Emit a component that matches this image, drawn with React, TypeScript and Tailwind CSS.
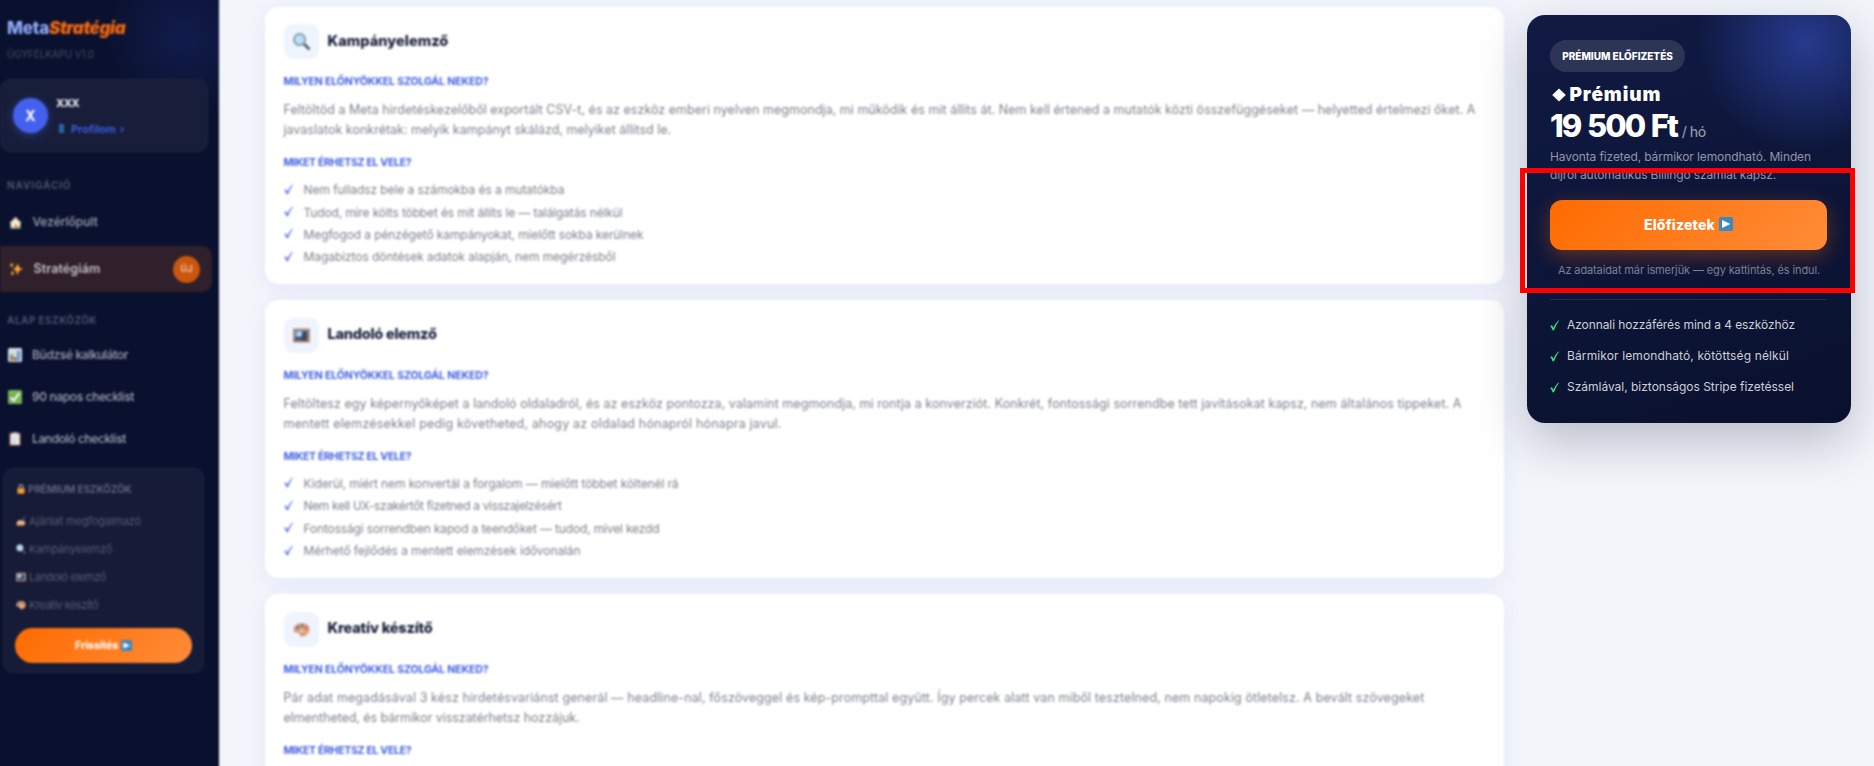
import { clsx } from "clsx";

type Line = { text: string; className: string };

type IconName = "house" | "sparkles" | "chart" | "check" | "clipboard" | "lock" | "writing" | "search" | "frame" | "palette" | "play";

type Tool = {
    icon: IconName;
    title: Line;
    benefit: Line[];
    results: Line[];
};

const tools: Tool[] = [
    {
        icon: "search",
        title: { text: "Kampányelemző", className: "tracking-[0.04px]" },
        benefit: [
            {
                text: "Feltöltöd a Meta hirdetéskezelőből exportált CSV-t, és az eszköz emberi nyelven megmondja, mi működik és mit állíts át. Nem kell értened a mutatók közti összefüggéseket — helyetted értelmezi őket. A",
                className: "tracking-[0.02px]",
            },
            { text: "javaslatok konkrétak: melyik kampányt skálázd, melyiket állítsd le.", className: "tracking-normal" },
        ],
        results: [
            { text: "Nem fulladsz bele a számokba és a mutatókba", className: "tracking-[-0.07px]" },
            { text: "Tudod, mire költs többet és mit állíts le — találgatás nélkül", className: "tracking-[-0.137px]" },
            { text: "Megfogod a pénzégető kampányokat, mielőtt sokba kerülnek", className: "tracking-[-0.105px]" },
            { text: "Magabiztos döntések adatok alapján, nem megérzésből", className: "tracking-[-0.072px]" },
        ],
    },
    {
        icon: "frame",
        title: { text: "Landoló elemző", className: "tracking-[-0.24px]" },
        benefit: [
            {
                text: "Feltöltesz egy képernyőképet a landoló oldaladról, és az eszköz pontozza, valamint megmondja, mi rontja a konverziót. Konkrét, fontossági sorrendbe tett javításokat kapsz, nem általános tippeket. A",
                className: "tracking-[0.055px]",
            },
            { text: "mentett elemzésekkel pedig követheted, ahogy az oldalad hónapról hónapra javul.", className: "tracking-[0.177px]" },
        ],
        results: [
            { text: "Kiderül, miért nem konvertál a forgalom — mielőtt többet költenél rá", className: "tracking-[-0.111px]" },
            { text: "Nem kell UX-szakértőt fizetned a visszajelzésért", className: "tracking-[-0.338px]" },
            { text: "Fontossági sorrendben kapod a teendőket — tudod, mivel kezdd", className: "tracking-[-0.152px]" },
            { text: "Mérhető fejlődés a mentett elemzések idővonalán", className: "tracking-[-0.09px]" },
        ],
    },
    {
        icon: "palette",
        title: { text: "Kreatív készítő", className: "tracking-[-0.17px]" },
        benefit: [
            {
                text: "Pár adat megadásával 3 kész hirdetésvariánst generál — headline-nal, főszöveggel és kép-prompttal együtt. Így percek alatt van miből tesztelned, nem napokig ötletelsz. A bevált szövegeket",
                className: "tracking-[0.1px]",
            },
            { text: "elmentheted, és bármikor visszatérhetsz hozzájuk.", className: "tracking-[-0.07px]" },
        ],
        results: [],
    },
];

const basicTools: { icon: IconName; label: string; className: string }[] = [
    { icon: "chart", label: "Büdzsé kalkulátor", className: "tracking-[-0.36px]" },
    { icon: "check", label: "90 napos checklist", className: "tracking-[-0.35px]" },
    { icon: "clipboard", label: "Landoló checklist", className: "tracking-[-0.38px]" },
];

const premiumTools: { icon: IconName; label: string; className: string }[] = [
    { icon: "writing", label: "Ajánlat megfogalmazó", className: "tracking-[-0.176px]" },
    { icon: "search", label: "Kampányelemző", className: "tracking-[-0.244px]" },
    { icon: "frame", label: "Landoló elemző", className: "tracking-[-0.373px]" },
    { icon: "palette", label: "Kreatív készítő", className: "tracking-[-0.495px]" },
];

const perks: Line[] = [
    { text: "Azonnali hozzáférés mind a 4 eszközhöz", className: "tracking-[-0.089px]" },
    { text: "Bármikor lemondható, kötöttség nélkül", className: "tracking-[0.123px]" },
    { text: "Számlával, biztonságos Stripe fizetéssel", className: "tracking-[-0.016px]" },
];

const shapes = {
    house: (
        <>
            <path d="M5 15h26v19H5z" fill="#ffe8b6" />
            <path d="M18 2 L34 18 L31 20 L18 8 L5 20 L2 18 Z" fill="#e6aaaa" />
            <path d="M18 7 L31 20 V34 H5 V20 Z" fill="#f5eedf" />
            <path d="M15 23h7v11h-7z" fill="#c98f62" />
            <path d="M23 30h10v5H23zM3 31h8v4H3z" fill="#5c913b" />
        </>
    ),
    sparkles: (
        <path
            d="M22 3 L26 14 L36 18 L26 22 L22 34 L18 22 L9 18 L18 14 Z M7 1 L9 6 L13 8 L9 10 L7 15 L5 10 L1 8 L5 6 Z M9 22 L11 27 L15 29 L11 31 L9 36 L7 31 L3 29 L7 27 Z"
            fill="#ffac33"
        />
    ),
    chart: (
        <>
            <rect width="36" height="36" rx="4" fill="#d5dde4" />
            <path d="M23 7h8v26h-8z" fill="#5c9dd6" />
            <path d="M5 17h8v16H5z" fill="#6f9e58" />
            <path d="M14 23h8v10h-8z" fill="#d05a52" />
        </>
    ),
    check: (
        <>
            <rect width="36" height="36" rx="4" fill="#77b255" />
            <path d="M7 20 L15 27 L29 8" fill="none" stroke="#fff" strokeWidth="5" />
        </>
    ),
    clipboard: (
        <>
            <rect x="4" y="2" width="28" height="33" rx="3" fill="#c1806a" />
            <path d="M7 6h22v26H7z" fill="#f1f4f8" />
            <path d="M12 1h12v7H12z" fill="#ccd6dd" />
            <path d="M11 14h14v2H11zM11 20h14v2H11zM11 26h9v2h-9z" fill="#aab8c2" />
        </>
    ),
    lock: (
        <>
            <path d="M11 17 V10 a7 7 0 0 1 14 0 V17" fill="none" stroke="#aab8c2" strokeWidth="4" />
            <rect x="5" y="15" width="26" height="20" rx="4" fill="#ff9a2e" />
        </>
    ),
    writing: (
        <>
            <path d="M3 21 L14 14 L30 18 L34 25 L28 34 H3 Z" fill="#f2b983" />
            <path d="M30 1 L33 4 L22 20 L18 22 Z" fill="#4a6fb5" />
            <path d="M2 29h28v5H2z" fill="#d78a4a" />
        </>
    ),
    search: (
        <>
            <path d="M23 23 L33 33" stroke="#4f5f72" strokeWidth="6" strokeLinecap="round" />
            <circle cx="14" cy="14" r="12" fill="#bbddf5" stroke="#8195aa" strokeWidth="3.5" />
        </>
    ),
    frame: (
        <>
            <rect y="3" width="36" height="30" rx="1" fill="#c1875f" />
            <path d="M4 7h28v22H4z" fill="#5b9be0" />
            <path d="M4 23 Q14 18 22 22 V29 H4z" fill="#3f5c80" />
            <circle cx="13" cy="15" r="5" fill="#c8def2" />
            <path d="M21 9 h9 v20 h-11 v-9z" fill="#42454f" />
        </>
    ),
    palette: (
        <>
            <path d="M18 4 C30 4 36 11 35 19 C34 28 26 33 18 33 C13 33 16 28 12 26 C8 24 1 26 1 19 C1 10 9 4 18 4 Z" fill="#d99e82" />
            <circle cx="10" cy="14" r="3.2" fill="#5c6f8c" />
            <circle cx="19" cy="10" r="3.2" fill="#6b7d62" />
            <circle cx="28" cy="15" r="3.2" fill="#dd5f4e" />
            <circle cx="27" cy="24" r="3.2" fill="#ffb04c" />
            <circle cx="18" cy="21" r="2.6" fill="#f7e3d8" />
        </>
    ),
    play: (
        <>
            <rect width="36" height="36" rx="4" fill="#3b88c3" />
            <path d="M8 8 L29 18 L8 28 Z" fill="#fff" />
        </>
    ),
};

const Icon = ({ name, className }: { name: IconName; className: string }) => (
    <svg viewBox="0 0 36 36" className={clsx("shrink-0", className)}>
        {shapes[name]}
    </svg>
);

const Check = ({ className }: { className?: string }) => (
    <svg viewBox="0 0 10 11" className={clsx("h-[11px] w-[10px] shrink-0", className)} fill="currentColor">
        <path d="M0.2 6.1 L2 5.3 L3.4 7.8 Q5.4 3.2 8.3 0.4 L9 0.8 Q6 4.9 4.1 10 L2.7 10.4 Q1.8 8 0.2 6.1 Z" />
    </svg>
);

const Sidebar = () => (
    <div className="h-[766px] w-[226px] shrink-0 overflow-hidden">
        <aside className="relative -ml-2 -mt-2 flex h-[790px] w-[227px] flex-col overflow-hidden bg-[#0a112f] pl-2 pt-6 blur-[1px]">
            <div className="absolute left-[112px] top-[-35px] h-[160px] w-[160px] rounded-full bg-[radial-gradient(circle,#121c4c_0%,transparent_70%)]" />
            <div className="relative flex h-6 items-center pl-[7px] text-[17px] font-extrabold leading-6">
                <span className="tracking-[-0.2px] text-[#8fabfb]">Meta</span>
                <span className="font-black italic tracking-[-0.4px] text-[#f3680d]">Stratégia</span>
            </div>
            <div className="relative mt-[7px] h-3.5 pl-[7px] text-[10px] leading-[14px] tracking-[-0.15px] text-[#474c61]">
                ÜGYFÉLKAPU V1.0
            </div>

            <div className="relative mt-[18px] flex h-[73px] w-[208px] items-center gap-2 rounded-[11px] border border-[#1d2544] bg-[#181e3a] pl-3">
                <div className="flex h-[35px] w-[35px] items-center justify-center rounded-full bg-[#4361ee] text-[14px] font-bold text-white shadow-[0_2px_9px_rgba(67,97,238,0.4)]">
                    X
                </div>
                <div className="flex h-[42px] flex-col justify-between">
                    <span className="text-[11px] font-extrabold leading-4 tracking-[-0.7px] text-[#e5e7ee]">XXX</span>
                    <span className="flex items-center text-[11px] font-semibold leading-4 text-[#4160f2]">
                        <span className="ml-[3px] mr-[7px] h-[9px] w-[5px] rounded-[1px] bg-[#2f62a5]" />
                        Profilom<span className="ml-1">›</span>
                    </span>
                </div>
            </div>

            <div className="mt-[26px] h-3.5 pl-[7px] text-[10px] font-bold leading-[14px] tracking-[0.85px] text-[#4c5167]">NAVIGÁCIÓ</div>
            <div className="mt-[7px] flex h-[46px] items-center pl-[8.5px]">
                <Icon name="house" className="mr-[11px] h-[13px] w-[13px]" />
                <span className="text-[12px] font-medium text-[#a3a6b4]">Vezérlőpult</span>
            </div>
            <div className="mt-px flex h-[46px] w-[212px] items-center rounded-r-[10px] bg-[#2f202b] pl-[8.5px] pr-[12px]">
                <Icon name="sparkles" className="mr-[11px] h-[14px] w-[14px]" />
                <span className="text-[12.5px] font-semibold tracking-[0.1px] text-[#c8c4cb]">Stratégiám</span>
                <span className="ml-auto flex h-[27px] w-[27px] items-center justify-center rounded-full bg-[#cb560e] text-[9px] font-bold text-[#f0c3a6]">
                    ÚJ
                </span>
            </div>

            <div className="mt-[21px] h-3.5 pl-[7px] text-[10px] font-bold leading-[14px] tracking-[0.43px] text-[#4c5167]">ALAP ESZKÖZÖK</div>
            <div className="mt-[7px] flex flex-col">
                {basicTools.map((tool) => (
                    <div key={tool.label} className="flex h-[42px] items-center gap-[10px] pl-2">
                        <Icon name={tool.icon} className="h-[14px] w-[14px]" />
                        <span className={clsx("text-[12px] font-medium text-[#a3a6b4]", tool.className)}>{tool.label}</span>
                    </div>
                ))}
            </div>

            <div className="ml-[3px] mt-2 flex h-[205px] w-[201px] flex-col rounded-[10px] border border-[#1b2140] bg-[#161b37] px-[11px] pt-[13px]">
                <div className="flex h-3.5 items-center text-[10px] font-bold tracking-[-0.1px] text-[#5f647a]">
                    <Icon name="lock" className="ml-px mr-[2px] h-[10px] w-[10px]" />PRÉMIUM ESZKÖZÖK
                </div>
                <div className="mt-[11px] flex flex-col">
                    {premiumTools.map((tool) => (
                        <div key={tool.label} className="flex h-7 items-center gap-[3px] text-[11px] text-[#575c72]">
                            <Icon name={tool.icon} className="ml-px h-[10px] w-[10px]" />
                            <span className={tool.className}>{tool.label}</span>
                        </div>
                    ))}
                </div>
                <button className="mt-[9px] flex h-[35px] w-[177px] shrink-0 items-center justify-center gap-[3px] rounded-full bg-[linear-gradient(135deg,#ff6b00,#ff8c38)] text-[11px] font-bold tracking-[-0.3px] text-white">
                    Frissítés <Icon name="play" className="h-[11px] w-[11px]" />
                </button>
            </div>
        </aside>
    </div>
);

const Heading = ({ children, className }: { children: string; className: string }) => (
    <h3 className={clsx("h-3.5 text-[10.5px] font-bold leading-[14px] text-[#3f5ee0]", className)}>{children}</h3>
);

const ToolCard = ({ tool }: { tool: Tool }) => (
    <section className="flex h-[277.5px] w-[1239px] shrink-0 flex-col rounded-[14px] bg-white px-[19px] pt-[17.5px] shadow-[0_4px_22px_rgba(67,97,238,0.09)]">
        <div className="flex h-[35px] items-center gap-[9px]">
            <div className="flex h-[35px] w-[35px] items-center justify-center rounded-[9px] bg-[#eff4ff]">
                <Icon name={tool.icon} className="h-[17px] w-[17px]" />
            </div>
            <h2 className={clsx("-mt-[2px] text-[14.5px] font-extrabold text-[#161c38]", tool.title.className)}>{tool.title.text}</h2>
        </div>
        <Heading className="mt-4 tracking-[-0.11px]">MILYEN ELŐNYÖKKEL SZOLGÁL NEKED?</Heading>
        <div className="mt-[11px] flex flex-col">
            {tool.benefit.map((line) => (
                <p key={line.text} className={clsx("h-5 whitespace-nowrap text-[12.5px] leading-5 text-[#7b818c]", line.className)}>
                    {line.text}
                </p>
            ))}
        </div>
        <Heading className="mt-[16px] tracking-[-0.29px]">MIKET ÉRHETSZ EL VELE?</Heading>
        <ul className="mt-[9px] flex flex-col">
            {tool.results.map((line) => (
                <li key={line.text} className="flex h-[22.4px] items-center gap-[10px] text-[12px] text-[#7b818c]">
                    <Check className="mb-0.5 text-[#5b76f2]" />
                    <span className={line.className}>{line.text}</span>
                </li>
            ))}
        </ul>
    </section>
);

const PremiumCard = () => (
    <div className="relative flex h-[408px] w-[324px] flex-col items-start overflow-hidden rounded-[18px] bg-[linear-gradient(160deg,#101a43,#0a112e)] px-[23px] pt-[25px]">
        <div className="absolute right-[-65px] top-[-83px] h-[220px] w-[220px] rounded-full bg-[radial-gradient(circle,#263a8e_0%,transparent_70%)]" />
        <div className="relative flex h-8 w-[135px] items-center justify-center rounded-full bg-[#2d3557] text-[10px] font-extrabold text-white">
            <span className="whitespace-nowrap">PRÉMIUM ELŐFIZETÉS</span>
        </div>
        <div className="relative mt-[10px] flex h-[26px] items-center text-[19px] font-black leading-[26px] text-white">
            <svg viewBox="0 0 14 14" className="ml-[1.5px] mr-[4px] h-[14px] w-[14px]" fill="currentColor">
                <path d="M7 0.4 L13.8 7 L7 13.6 L0.2 7 Z" />
            </svg>
            <span className="tracking-[0.9px]">Prémium</span>
        </div>
        <div className="relative flex h-9 items-baseline leading-9 text-white">
            <span className="text-[31px] font-extrabold tracking-[-2px] [word-spacing:2px]">19 500 Ft</span>
            <span className="ml-[5px] text-[14px] font-medium tracking-[-0.45px] text-[#9195a6]">/ hó</span>
        </div>
        <div className="relative mt-1 flex flex-col whitespace-nowrap text-[12px] leading-[18.3px] text-[#9196a7]">
            <span className="tracking-[-0.111px]">Havonta fizeted, bármikor lemondható. Minden</span>
            <span className="tracking-[-0.143px]">díjról automatikus Billingo számlát kapsz.</span>
        </div>
        <button className="relative mt-[15px] flex h-[50px] w-[277px] items-center justify-center gap-[4px] rounded-[12px] bg-[linear-gradient(135deg,#ff6b00,#ff8c38)] text-[14px] font-extrabold tracking-[0.2px] text-white shadow-[0_6px_20px_rgba(255,107,0,0.35)]">
            Előfizetek <Icon name="play" className="mb-0.5 h-[14px] w-[14px]" />
        </button>
        <p className="relative mt-[12px] w-full whitespace-nowrap text-center text-[11px] leading-4 tracking-[-0.123px] text-[#7b8093]">
            Az adataidat már ismerjük — egy kattintás, és indul.
        </p>
        <div className="mt-[21px] h-px w-[277px] bg-[#242b47]" />
        <ul className="mt-[10px] flex flex-col">
            {perks.map((perk) => (
                <li key={perk.text} className="flex h-[31px] items-center gap-[7px] whitespace-nowrap text-[12px] text-[#ced0d8]">
                    <Check className="text-[#3ddc78]" />
                    <span className={perk.className}>{perk.text}</span>
                </li>
            ))}
        </ul>
    </div>
);

export default function App() {
    return (
        <div className="flex h-[766px] w-[1874px] overflow-hidden bg-[#f3f5fb] font-['Inter',sans-serif]">
            <Sidebar />
            <main className="ml-[38.5px] flex h-[766px] w-[1239px] shrink-0 flex-col gap-[16.3px] pt-[6.5px] blur-[1.1px]">
                {tools.map((tool) => (
                    <ToolCard key={tool.title.text} tool={tool} />
                ))}
            </main>
            <div className="relative ml-[23.5px] h-[423px] pt-[15px]">
                <div className="rounded-[18px] shadow-[0_18px_50px_rgba(10,17,47,0.25)]">
                    <PremiumCard />
                </div>
                <div className="absolute left-[-7px] top-[168px] h-[125px] w-[335px] border-[5px] border-[#ff0000]" />
            </div>
        </div>
    );
}
